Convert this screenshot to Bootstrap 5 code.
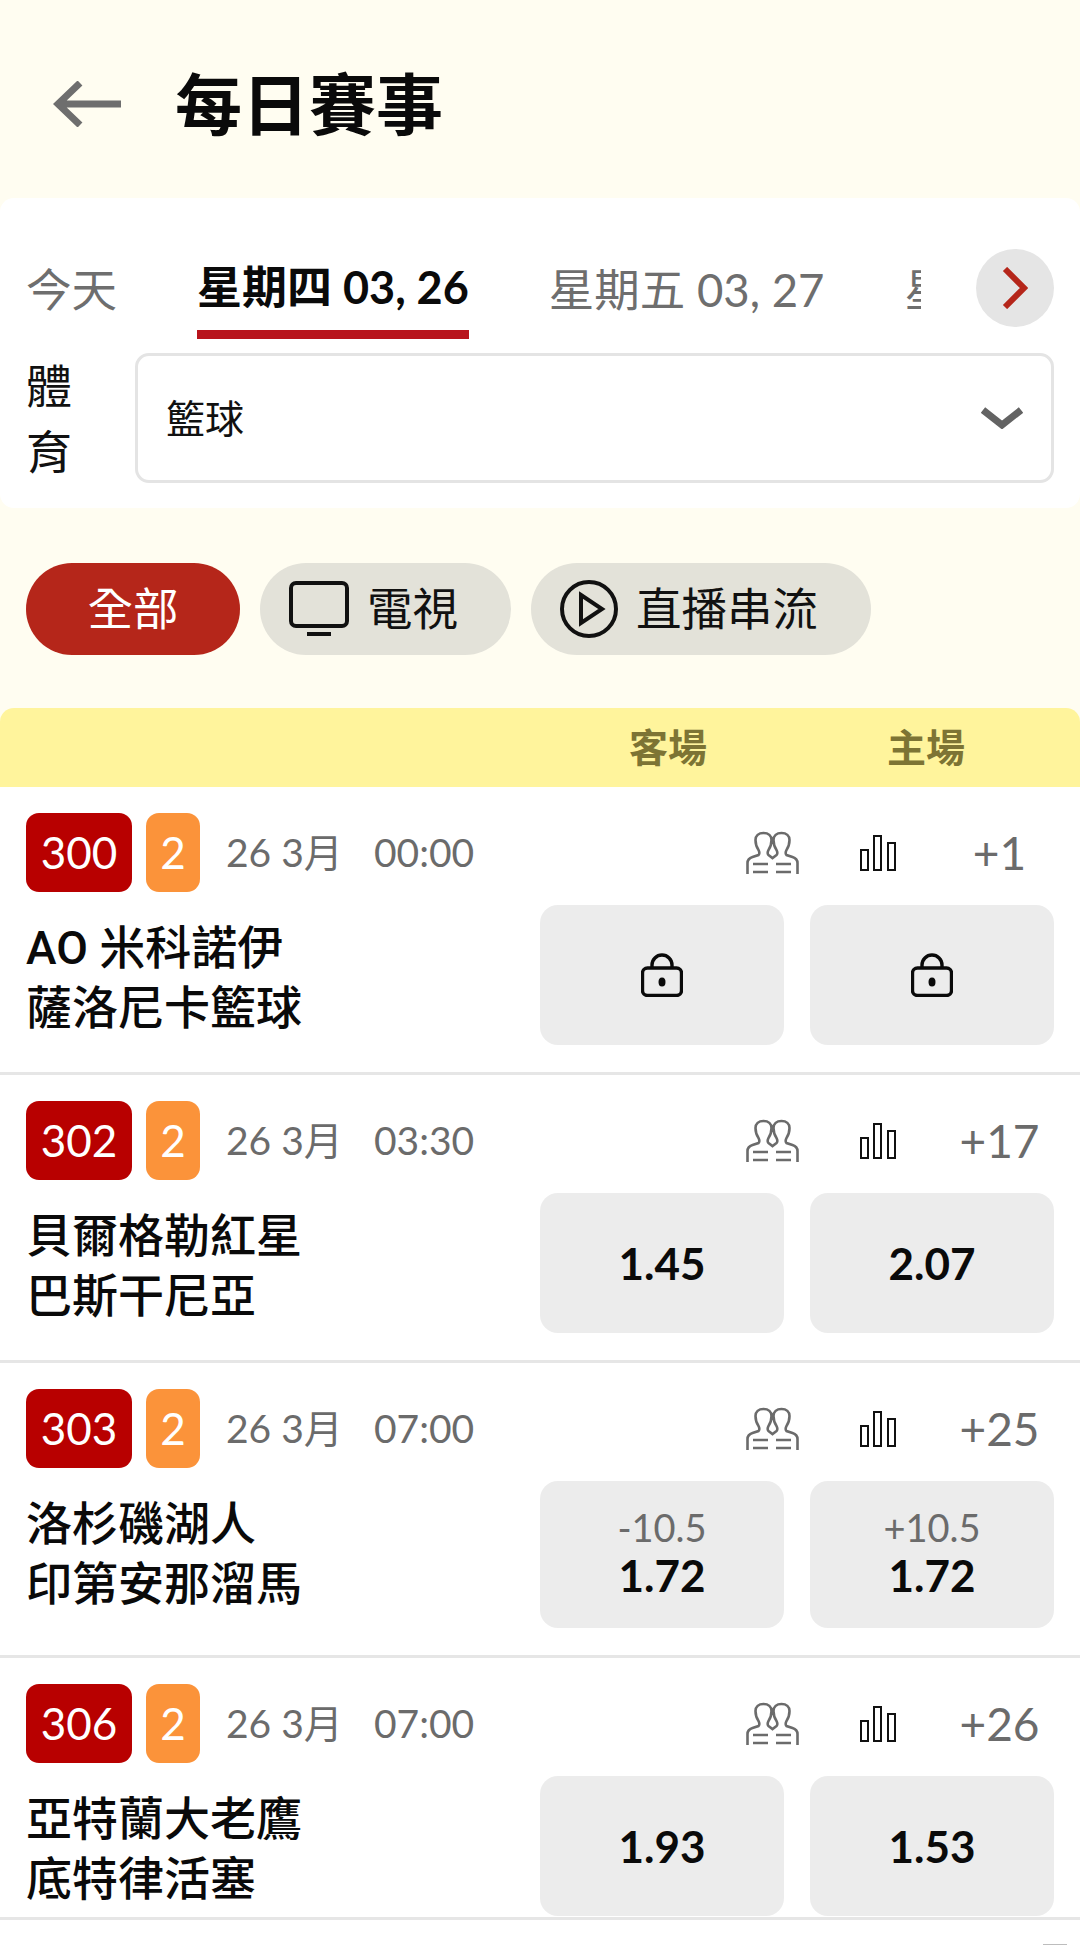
<!DOCTYPE html>
<html lang="zh-Hant">
<head>
  <meta charset="UTF-8" />
  <meta name="viewport" content="width=device-width, initial-scale=1.0" />
  <title>每日賽事</title>
  <link href="https://cdn.jsdelivr.net/npm/bootstrap@5.3.3/dist/css/bootstrap.min.css" rel="stylesheet">
  <style>
    html, body {
      height: 1945px;
      overflow: hidden;
    }
    body {
      background-color: #fffdf1;
      font-family: "Lato", "Noto Sans CJK TC", sans-serif;
      color: #000;
    }
    .page-head {
      height: 198px;
      padding-left: 53px;
      padding-top: 10px;
      gap: 54px;
    }
    .page-head h1 {
      margin: 0;
      font-size: 67px;
      font-weight: 700;
      color: #0a0a0a;
    }
    .top-panel {
      height: 310px;
      padding: 0 26px;
      background: #fff;
      border-radius: 14px;
    }
    .tab-bar {
      height: 141px;
    }
    .tab-scroll {
      width: 896px;
      gap: 80px;
      overflow: hidden;
      white-space: nowrap;
    }
    .tab-scroll a {
      flex: none;
      height: 141px;
      padding-top: 64px;
      font-size: 45.5px;
      line-height: 56px;
      color: #6e6e6e;
      text-decoration: none;
    }
    .tab-scroll a.active {
      padding-top: 61px;
      font-size: 45px;
      font-weight: 700;
      color: #0a0a0a;
      border-bottom: 9px solid #b8141c;
    }
    .next-btn {
      flex: none;
      width: 78px;
      height: 78px;
      margin-left: 55px;
      margin-top: 51px;
      padding: 0;
      background: #e5e5e5;
      border: 0;
    }
    .sport-row {
      margin-top: 14px;
      gap: 63px;
    }
    .sport-label {
      flex: none;
      width: 46px;
      font-size: 46px;
      line-height: 66px;
      color: #111;
    }
    .sport-select {
      height: 130px;
      padding: 0 28px;
      font-size: 39px;
      color: #111;
      border: 3px solid #e4e4e4;
      border-radius: 14px;
      background-size: 42px 22px;
      background-position: right 28px center;
      background-image: url("data:image/svg+xml,%3csvg xmlns='http://www.w3.org/2000/svg' viewBox='0 0 42 22'%3e%3cpath fill='none' stroke='%23636363' stroke-width='7' d='M2 3l19 15L40 3'/%3e%3c/svg%3e");
    }
    .filter-row {
      margin-top: 55px;
      padding-left: 26px;
      gap: 20px;
    }
    .filter-pill {
      height: 92px;
      padding: 0 53px 0 29px;
      gap: 18px;
      font-size: 45.5px;
      line-height: 1;
      color: #111;
      background: #e3e2d9;
      border: 0;
      border-radius: 46px;
    }
    .filter-pill.active {
      width: 214px;
      padding: 0;
      justify-content: center;
      color: #fff;
      background: #b5261a;
    }
    .list-head {
      height: 79px;
      margin-top: 53px;
      background: #fff49c;
      border-radius: 14px 14px 0 0;
      font-size: 39px;
      font-weight: 700;
      color: #7d7434;
    }
    .list-head span {
      width: 258px;
      text-align: center;
    }
    .list-head span:first-child {
      margin-left: 539px;
    }
    .game-row {
      padding: 26px 26px 27px 26px;
      background: #fff;
      border-bottom: 3px solid #e6e6e6;
    }
    .game-row.tight {
      padding-bottom: 1px;
    }
    .game-meta {
      height: 79px;
      margin-bottom: 13px;
      font-size: 39px;
      color: #6b6b6b;
    }
    .code-tag, .part-tag {
      height: 79px;
      font-size: 44px;
      line-height: 79px;
      text-align: center;
      color: #fff;
      border-radius: 13px;
    }
    .code-tag {
      width: 106px;
      background: #b80000;
    }
    .part-tag {
      width: 54px;
      margin-left: 14px;
      background: #fb933a;
    }
    .game-date {
      width: 148px;
      margin-left: 26px;
    }
    .game-time {
      width: 359px;
    }
    .meta-icon {
      flex: none;
      width: 78px;
      color: #6b6b6b;
    }
    .meta-bars {
      flex: none;
      width: 134px;
    }
    .meta-more {
      flex: none;
      width: 109px;
      font-size: 46px;
      text-align: center;
    }
    .team-names {
      width: 514px;
      padding-top: 13px;
      font-family: "Roboto", "Noto Sans CJK TC", sans-serif;
      font-size: 46px;
      font-weight: 500;
      line-height: 60px;
      color: #0a0a0a;
    }
    .odds-btn {
      flex: none;
      width: 244px;
      height: 140px;
      padding: 0;
      font-size: 44px;
      font-weight: 700;
      line-height: 50px;
      color: #0a0a0a;
      background: #ececec;
      border: 0;
      border-radius: 18px;
    }
    .odds-btn + .odds-btn {
      margin-left: 26px;
    }
    .odds-btn.has-line {
      height: 147px;
      padding-bottom: 5px;
    }
    .odds-btn small {
      display: block;
      font-size: 38px;
      font-weight: 400;
      line-height: 46px;
      color: #6b6b6b;
    }
    .next-row {
      padding: 24px 13px 0 0;
      background: #fff;
      height: 40px;
    }
    .next-mark {
      width: 24px;
      height: 3px;
      background: #bdbdbd;
    }
  </style>
</head>
<body>
  <svg width="0" height="0" class="d-block">
    <symbol id="ic-people" viewBox="0 0 52 44">
      <path fill="none" stroke="currentColor" stroke-width="2.6" d="M1.5 43V32c0-3 2-5 5-6l6-2c1-1 1-3 0-5-2-3-3-6-3-10 0-4 3-7 8-7s8 3 8 7c0 4-1 7-3 10-1 2-1 4 0 5l4 3 4-3c1-1 1-3 0-5-2-3-3-6-3-10 0-4 3-7 8-7s8 3 8 7c0 4-1 7-3 10-1 2-1 4 0 5l6 2c3 1 5 3 5 6v11"/>
      <path fill="none" stroke="currentColor" stroke-width="2.6" d="M7 33h15M7 41h15M30 33h15M30 41h15"/>
    </symbol>
    <symbol id="ic-bars" viewBox="0 0 36 36">
      <path fill="none" stroke="#111" stroke-width="2" d="M1 15h7v20H1zM14 1h7v34h-7zM28 8h7v27h-7z"/>
    </symbol>
    <symbol id="ic-lock" viewBox="0 0 42 44">
      <rect x="1.5" y="15" width="39" height="27.5" rx="5" fill="none" stroke="#0a0a0a" stroke-width="3.4"/>
      <path fill="none" stroke="#0a0a0a" stroke-width="3.4" d="M11 15V12a10 10 0 0 1 20 0v3"/>
      <ellipse cx="21" cy="29" rx="3.5" ry="4.5" fill="#0a0a0a"/>
    </symbol>
  </svg>

  <header class="page-head d-flex align-items-center">
    <svg width="68" height="46" viewBox="0 0 68 46" fill="none" stroke="#6e6e6e" stroke-width="7">
      <path d="M68 23H6M27 2L5 23l22 21"/>
    </svg>
    <h1>每日賽事</h1>
  </header>

  <section class="top-panel">
    <div class="tab-bar d-flex">
      <div class="tab-scroll d-flex">
        <a href="#">今天</a>
        <a href="#" class="active">星期四 03, 26</a>
        <a href="#">星期五 03, 27</a>
        <a href="#">星期六 03, 28</a>
      </div>
      <button class="btn next-btn rounded-circle d-flex align-items-center justify-content-center" type="button">
        <svg width="26" height="42" viewBox="0 0 26 42" fill="none" stroke="#b5261a" stroke-width="6"><path d="M3 2l19 19L3 40"/></svg>
      </button>
    </div>
    <div class="sport-row d-flex">
      <label class="sport-label" for="sport">體育</label>
      <select id="sport" class="form-select sport-select flex-grow-1">
        <option>籃球</option>
      </select>
    </div>
  </section>

  <div class="filter-row d-flex">
    <button class="btn filter-pill active d-flex align-items-center" type="button">全部</button>
    <button class="btn filter-pill d-flex align-items-center" type="button">
      <svg width="60" height="56" viewBox="0 0 60 56" fill="none" stroke="#111" stroke-width="4">
        <rect x="2" y="2" width="56" height="43" rx="5"/>
        <path d="M18 53h24" stroke-width="4"/>
      </svg>
      電視
    </button>
    <button class="btn filter-pill d-flex align-items-center" type="button">
      <svg width="58" height="58" viewBox="0 0 58 58" fill="none" stroke="#111" stroke-width="4">
        <circle cx="29" cy="29" r="27"/>
        <path d="M21 15l21 14-21 14z"/>
      </svg>
      直播串流
    </button>
  </div>

  <div class="list-head d-flex align-items-center">
    <span>客場</span>
    <span>主場</span>
  </div>

  <div class="game-row">
    <div class="game-meta d-flex align-items-center">
      <span class="code-tag">300</span><span class="part-tag">2</span>
      <span class="game-date">26 3月</span><span class="game-time">00:00</span>
      <svg class="meta-icon" height="44"><use href="#ic-people"/></svg>
      <svg class="meta-bars" height="36"><use href="#ic-bars"/></svg>
      <span class="meta-more">+1</span>
    </div>
    <div class="d-flex">
      <div class="team-names">AO 米科諾伊<br>薩洛尼卡籃球</div>
      <button class="btn odds-btn" type="button"><svg class="d-block mx-auto" width="42" height="44"><use href="#ic-lock"/></svg></button>
      <button class="btn odds-btn" type="button"><svg class="d-block mx-auto" width="42" height="44"><use href="#ic-lock"/></svg></button>
    </div>
  </div>

  <div class="game-row">
    <div class="game-meta d-flex align-items-center">
      <span class="code-tag">302</span><span class="part-tag">2</span>
      <span class="game-date">26 3月</span><span class="game-time">03:30</span>
      <svg class="meta-icon" height="44"><use href="#ic-people"/></svg>
      <svg class="meta-bars" height="36"><use href="#ic-bars"/></svg>
      <span class="meta-more">+17</span>
    </div>
    <div class="d-flex">
      <div class="team-names">貝爾格勒紅星<br>巴斯干尼亞</div>
      <button class="btn odds-btn" type="button">1.45</button>
      <button class="btn odds-btn" type="button">2.07</button>
    </div>
  </div>

  <div class="game-row">
    <div class="game-meta d-flex align-items-center">
      <span class="code-tag">303</span><span class="part-tag">2</span>
      <span class="game-date">26 3月</span><span class="game-time">07:00</span>
      <svg class="meta-icon" height="44"><use href="#ic-people"/></svg>
      <svg class="meta-bars" height="36"><use href="#ic-bars"/></svg>
      <span class="meta-more">+25</span>
    </div>
    <div class="d-flex">
      <div class="team-names">洛杉磯湖人<br>印第安那溜馬</div>
      <button class="btn odds-btn has-line" type="button"><small>-10.5</small>1.72</button>
      <button class="btn odds-btn has-line" type="button"><small>+10.5</small>1.72</button>
    </div>
  </div>

  <div class="game-row tight">
    <div class="game-meta d-flex align-items-center">
      <span class="code-tag">306</span><span class="part-tag">2</span>
      <span class="game-date">26 3月</span><span class="game-time">07:00</span>
      <svg class="meta-icon" height="44"><use href="#ic-people"/></svg>
      <svg class="meta-bars" height="36"><use href="#ic-bars"/></svg>
      <span class="meta-more">+26</span>
    </div>
    <div class="d-flex">
      <div class="team-names">亞特蘭大老鷹<br>底特律活塞</div>
      <button class="btn odds-btn" type="button">1.93</button>
      <button class="btn odds-btn" type="button">1.53</button>
    </div>
  </div>
  <div class="next-row d-flex justify-content-end">
    <div class="next-mark"></div>
  </div>

  <script src="https://cdn.jsdelivr.net/npm/bootstrap@5.3.3/dist/js/bootstrap.bundle.min.js"></script>
</body>
</html>
